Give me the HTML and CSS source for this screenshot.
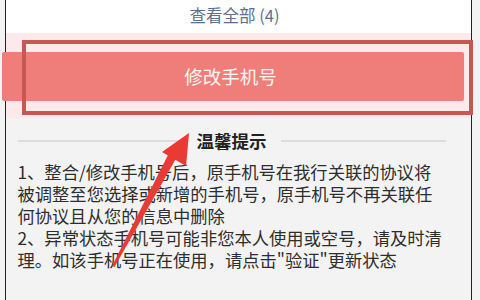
FILE: index.html
```html
<!DOCTYPE html>
<html lang="zh">
<head>
<meta charset="utf-8">
<link rel="stylesheet" href="styles.css">
</head>
<body>
<div class="page">
  <div class="frame">
    <div class="top">查看全部 (4)</div>
    <div class="btn-area">
      <div class="btn">修改手机号</div>
    </div>
    <div class="tips">
      <div class="tips-head"><span class="rule"></span><span class="tips-title">温馨提示</span><span class="rule"></span></div>
      <p class="tips-text">1、整合/修改手机号后，原手机号在我行关联的协议将<br>被调整至您选择或新增的手机号，原手机号不再关联任<br>何协议且从您的信息中删除<br>2、异常状态手机号可能非您本人使用或空号，请及时清<br>理。如该手机号正在使用，请点击"验证"更新状态</p>
    </div>
  </div>
  <div class="mark"></div>
  <svg class="arrow" width="480" height="300" viewBox="0 0 480 300">
    <polygon points="112,266 114.5,267 178,155 170,151" fill="#e93a33"/>
    <polygon points="189,133 162,152 186,166" fill="#e93a33"/>
  </svg>
</div>
</body>
</html>
```

FILE: styles.css
```css
* { box-sizing: border-box; }
html, body { margin: 0; padding: 0; }
body {
  width: 480px;
  height: 300px;
  overflow: hidden;
  background: #f3f3f3;
  font-family: "Noto Sans CJK SC", "Noto Sans", sans-serif;
}
.page {
  position: relative;
  width: 480px;
  height: 300px;
  background: #f3f3f3;
}
.frame {
  margin-left: 5px;
  width: 467px;
  height: 300px;
  border-left: 1.5px solid #222;
  border-right: 1.5px solid #222;
  display: flex;
  flex-direction: column;
}
.top {
  height: 33px;
  background: #fff;
  color: #5d6f8c;
  font-size: 16.5px;
  line-height: 31px;
  text-align: center;
  padding-right: 8px;
}
.btn-area {
  height: 85px;
  background: #fbe9ec;
  padding-top: 19px;
}
.btn {
  margin-left: -4.5px;
  width: 462px;
  height: 49px;
  background: #ef7e7a;
  border-radius: 2px;
  color: #fff5f5;
  font-size: 18.5px;
  line-height: 49px;
  text-align: center;
  padding-right: 4px;
}
.tips {
  flex: 1;
  background: #f3f3f3;
  padding: 11.5px 0 0 11.5px;
}
.tips-head {
  display: flex;
  align-items: center;
  gap: 14px;
  width: 428px;
  height: 22px;
}
.rule {
  flex: 1;
  height: 2px;
  background: #dcdcdc;
}
.tips-title {
  font-size: 17.5px;
  font-weight: bold;
  color: #222;
  line-height: 22px;
  margin-left: 100px;
  margin-right: 100px;
}
.tips-head .rule:first-child { margin-right: -100px; }
.tips-head .rule:last-child { margin-left: -100px; }
.tips-text {
  margin: 9px 0 0 0;
  font-size: 17.3px;
  line-height: 22px;
  color: #2e2e2e;
  white-space: nowrap;
}
.mark {
  position: absolute;
  left: 22px;
  top: 40px;
  width: 451px;
  height: 75px;
  border: 4px solid #c55850;
}
.arrow {
  position: absolute;
  left: 0;
  top: 0;
}
```
